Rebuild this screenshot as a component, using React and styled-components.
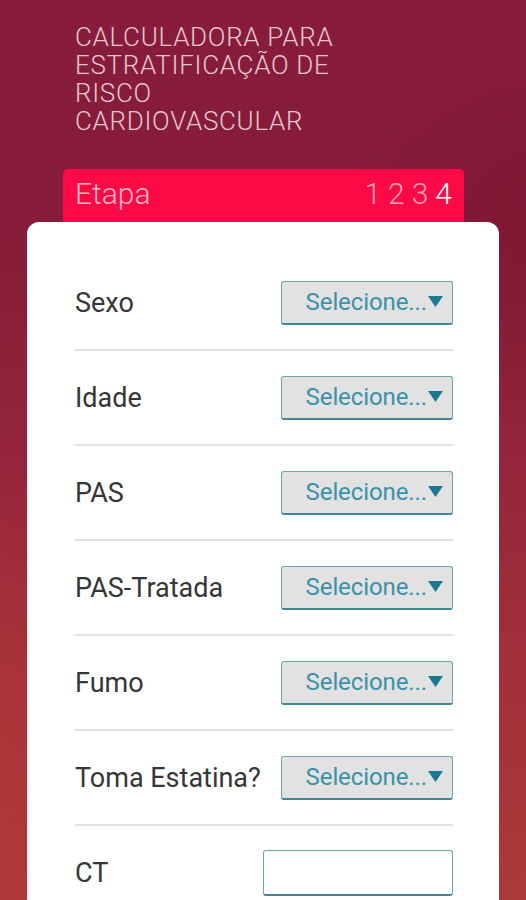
import React from "react";
import styled, { createGlobalStyle } from "styled-components";

const GlobalStyle = createGlobalStyle`
  html, body {
    margin: 0;
    padding: 0;
  }
  body {
    font-family: Roboto, "Liberation Sans", sans-serif;
  }
`;

const Screen = styled.div`
  width: 526px;
  height: 900px;
  overflow: hidden;
  box-sizing: border-box;
  padding-top: 23px;
  background:
    radial-gradient(ellipse 420px 300px at 110% 25%, rgba(120, 20, 45, 0.55), transparent 70%),
    radial-gradient(ellipse 300px 380px at -10% 80%, rgba(190, 60, 55, 0.35), transparent 70%),
    linear-gradient(180deg, #871c3c 0%, #861c39 25%, #93243a 50%, #a3303a 75%, #ad3838 100%);
`;

const Title = styled.h1`
  margin: 0 0 0 75px;
  width: 300px;
  font-family: Roboto, "Liberation Sans", sans-serif;
  font-weight: 300;
  font-size: 26px;
  line-height: 28px;
  letter-spacing: 0.7px;
  color: #e6c6cd;
  text-transform: uppercase;
`;

const StepBar = styled.div`
  margin: 34px 62px 0 63px;
  height: 56px;
  box-sizing: border-box;
  padding: 5px 12px 0 12px;
  background: #fb0a45;
  border-radius: 5px 5px 0 0;
  display: flex;
  justify-content: space-between;
  align-items: flex-start;
  font-weight: 300;
  font-size: 30px;
  line-height: 40px;
  color: #f6b8c8;
`;

const Steps = styled.div`
  display: flex;
  gap: 7px;
`;

const Step = styled.span`
  color: ${p => (p.active ? "#ffffff" : "#f7a3b9")};
`;

const Card = styled.div`
  margin: -3px 27px 0 27px;
  background: #ffffff;
  border-radius: 12px 12px 0 0;
  padding: 34px 46px 0 48px;
  height: 700px;
`;

const Row = styled.div`
  display: flex;
  align-items: center;
  justify-content: space-between;
  height: 93px;
  border-bottom: ${p => (p.last ? "none" : "2px solid #e2e2e2")};
`;

const Label = styled.span`
  font-size: 27px;
  color: #363636;
`;

const Select = styled.div`
  width: 172px;
  height: 44px;
  box-sizing: border-box;
  background: #e2e2e2;
  border: 1.5px solid #6aa6ab;
  border-bottom: 2px solid #3f8791;
  border-radius: 3px;
  display: flex;
  align-items: center;
  justify-content: flex-end;
  padding: 0 9px 0 0;
  gap: 1px;
  font-size: 24px;
  color: #3a92a8;
  letter-spacing: -0.1px;
`;

const Arrow = styled.svg`
  width: 15px;
  height: 11px;
  margin-top: -2px;
  flex: none;
`;

const TextInput = styled.div`
  width: 190px;
  height: 46px;
  box-sizing: border-box;
  border: 1.5px solid #6aa6ab;
  border-bottom: 2px solid #3f8791;
  border-radius: 3px;
  background: #ffffff;
`;

const fields = ["Sexo", "Idade", "PAS", "PAS-Tratada", "Fumo", "Toma Estatina?"];

export default function App() {
  return (
    <>
      <GlobalStyle />
      <Screen>
        <Title>
          Calculadora para
          <br />
          estratificação de
          <br />
          risco
          <br />
          cardiovascular
        </Title>
        <StepBar>
          <span>Etapa</span>
          <Steps>
            <Step>1</Step>
            <Step>2</Step>
            <Step>3</Step>
            <Step active>4</Step>
          </Steps>
        </StepBar>
        <Card>
          {fields.map(f => (
            <Row key={f}>
              <Label>{f}</Label>
              <Select>
                Selecione...
                <Arrow viewBox="0 0 15 11">
                  <polygon points="0,0 15,0 7.5,11" fill="#1a7890" />
                </Arrow>
              </Select>
            </Row>
          ))}
          <Row last>
            <Label>CT</Label>
            <TextInput />
          </Row>
        </Card>
      </Screen>
    </>
  );
}
